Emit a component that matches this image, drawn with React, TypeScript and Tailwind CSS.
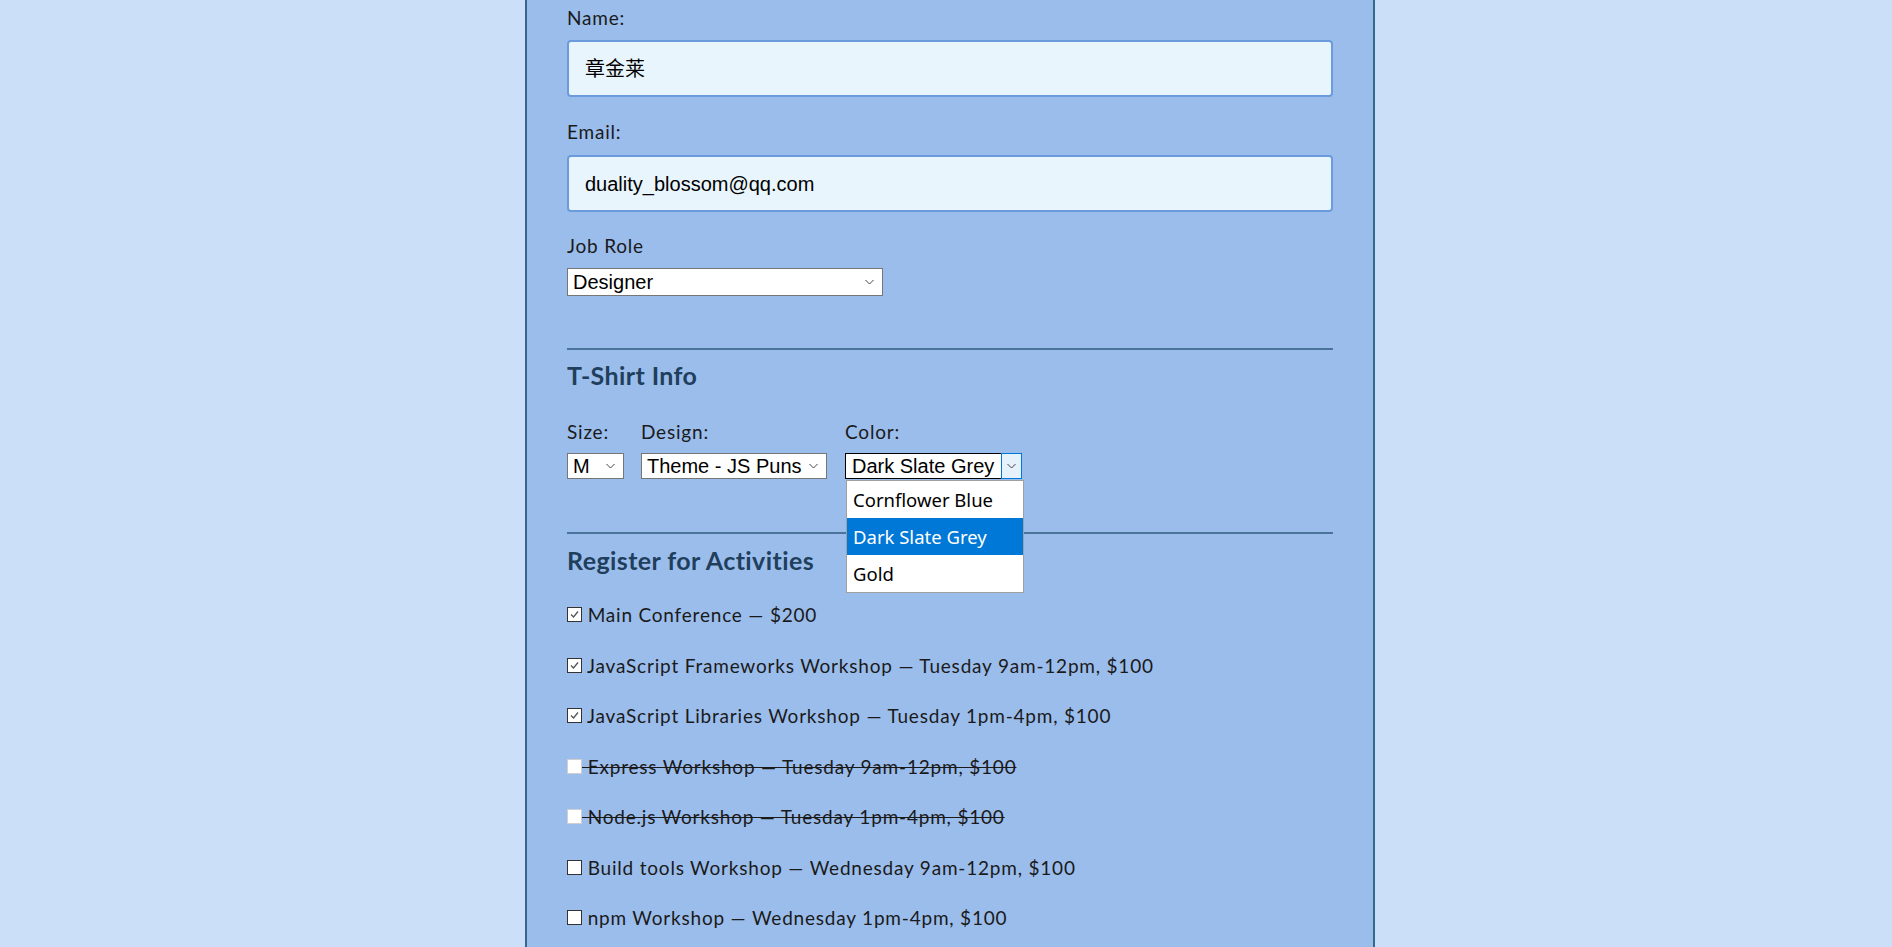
import React from "react";

const LBL = "font-['Lato','Noto_Sans',sans-serif] text-[19px] tracking-[0.8px] leading-[27px] text-[#1a1a1a]";
const SEL = "font-['Liberation_Sans','Noto_Sans_CJK_SC',sans-serif] text-[20px] text-black";

function Chevron() {
  return (
    <svg width="9" height="6" viewBox="0 0 9 6" className="shrink-0">
      <path d="M0.5 1 L4.5 5 L8.5 1" fill="none" stroke="#444" strokeWidth="1" />
    </svg>
  );
}

function FakeSelect({ value, className }: { value: string; className: string }) {
  return (
    <div
      className={`flex items-center justify-between bg-white border border-[#767676] pl-[5px] pr-[8px] ${SEL} ${className}`}
    >
      <span className="leading-none">{value}</span>
      <Chevron />
    </div>
  );
}

function Box({ state }: { state: "checked" | "empty" | "disabled" }) {
  if (state === "checked") {
    return (
      <span className="inline-flex w-[15px] h-[15px] bg-white border border-[#333] items-center justify-center shrink-0">
        <svg width="11" height="11" viewBox="0 0 11 11">
          <path d="M2 5.5 L4.5 8 L9 2.5" fill="none" stroke="#555" strokeWidth="1.3" />
        </svg>
      </span>
    );
  }
  if (state === "disabled") {
    return <span className="inline-block w-[15px] h-[15px] bg-white border border-[#cfcfcf] shrink-0" />;
  }
  return <span className="inline-block w-[15px] h-[15px] bg-white border border-[#333] shrink-0" />;
}

const activities: { text: string; state: "checked" | "empty" | "disabled" }[] = [
  { text: "Main Conference — $200", state: "checked" },
  { text: "JavaScript Frameworks Workshop — Tuesday 9am-12pm, $100", state: "checked" },
  { text: "JavaScript Libraries Workshop — Tuesday 1pm-4pm, $100", state: "checked" },
  { text: "Express Workshop — Tuesday 9am-12pm, $100", state: "disabled" },
  { text: "Node.js Workshop — Tuesday 1pm-4pm, $100", state: "disabled" },
  { text: "Build tools Workshop — Wednesday 9am-12pm, $100", state: "empty" },
  { text: "npm Workshop — Wednesday 1pm-4pm, $100", state: "empty" },
];

export default function App() {
  return (
    <div className="w-full h-[947px] overflow-hidden bg-[#cbdff8]">
      <div className="ml-[525px] w-[850px] h-[947px] bg-[#9bbdec] border-x-2 border-[#35678f] px-[40px] pt-[4px]">
        <div className={LBL}>Name:</div>
        <div className="mt-[9px] h-[57px] rounded-[4px] border-2 border-[#6c9bdb] bg-[#e9f5fc] flex items-center pl-[16px] font-['Liberation_Sans','Noto_Sans_CJK_SC',sans-serif] text-[20px] text-black">
          章金莱
        </div>

        <div className={`mt-[21px] h-[27px] ${LBL}`}>Email:</div>
        <div className={`mt-[10px] h-[57px] rounded-[4px] border-2 border-[#6c9bdb] bg-[#e9f5fc] flex items-center pl-[16px] ${SEL}`}>
          duality_blossom@qq.com
        </div>

        <div className={`mt-[20px] h-[27px] ${LBL}`}>Job Role</div>
        <FakeSelect value="Designer" className="mt-[9px] w-[316px] h-[28px]" />

        <div className="mt-[52px] h-[2px] bg-[#4a7499]" />

        <h2 className="mt-[9px] font-['Lato',sans-serif] font-bold text-[25px] tracking-[0.4px] leading-[32px] text-[#1f3f5c]">
          T-Shirt Info
        </h2>

        <div className="mt-[27px] flex">
          <div className="w-[57px] mr-[17px]">
            <div className={LBL}>Size:</div>
            <FakeSelect value="M" className="mt-[8px] w-[57px] h-[26px]" />
          </div>
          <div className="w-[186px] mr-[18px]">
            <div className={LBL}>Design:</div>
            <FakeSelect value="Theme - JS Puns" className="mt-[8px] w-[186px] h-[26px]" />
          </div>
          <div className="relative w-[176px]">
            <div className={LBL}>Color:</div>
            <div className={`mt-[8px] w-[177px] h-[26px] flex bg-white border border-black ${SEL}`}>
              <span className="flex-1 flex items-center pl-[6px] leading-none">Dark Slate Grey</span>
              <span className="w-[21px] -my-[1px] -mr-[1px] border border-[#0078d7] bg-[#e5f1fb] flex items-center justify-center">
                <Chevron />
              </span>
            </div>
            <div className="absolute left-[1px] top-[62px] w-[178px] bg-white border border-[#a0a0a0] font-['Noto_Sans',sans-serif] text-[18.5px] text-black z-10">
              <div className="h-[37px] flex items-center pl-[6px]">Cornflower Blue</div>
              <div className="h-[37px] flex items-center pl-[6px] bg-[#0078d7] text-white">Dark Slate Grey</div>
              <div className="h-[37px] flex items-center pl-[6px]">Gold</div>
            </div>
          </div>
        </div>

        <div className="mt-[53px] h-[2px] bg-[#4a7499]" />

        <h2 className="mt-[10px] font-['Lato',sans-serif] font-bold text-[25px] tracking-[0.4px] leading-[32px] text-[#1f3f5c]">
          Register for Activities
        </h2>

        <div className="mt-[25px] flex flex-col gap-[23.5px]">
          {activities.map((a) => (
            <div key={a.text} className={`flex items-center h-[27px] ${LBL}`}>
              <Box state={a.state} />
              <span className={`whitespace-pre ${a.state === "disabled" ? "line-through" : ""}`}>
                {" " + a.text}
              </span>
            </div>
          ))}
        </div>
      </div>
    </div>
  );
}
